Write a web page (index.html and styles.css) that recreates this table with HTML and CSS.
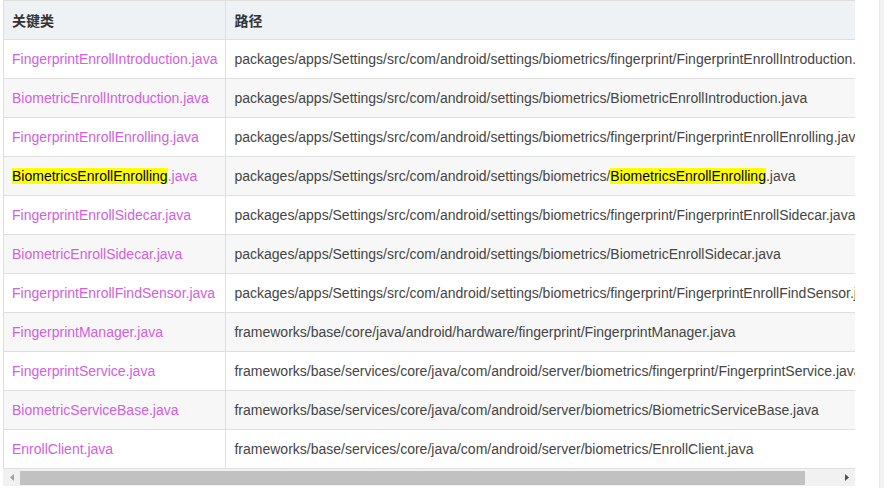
FILE: index.html
```html
<!DOCTYPE html>
<html lang="zh-CN">
<head>
    <meta charset="UTF-8">
    <meta name="viewport" content="width=device-width, initial-scale=1.0">
    <title>关键类</title>
    <link rel="stylesheet" href="styles.css">
</head>
<body>
    <div class="page">
        <div class="table-box">
            <div class="table-wrap">
                <table class="class-table">
                    <thead>
                        <tr>
                            <th>关键类</th>
                            <th>路径</th>
                        </tr>
                    </thead>
                    <tbody>
                        <tr>
                            <td><a href="#">FingerprintEnrollIntroduction.java</a></td>
                            <td>packages/apps/Settings/src/com/android/settings/biometrics/fingerprint/FingerprintEnrollIntroduction.java</td>
                        </tr>
                        <tr>
                            <td><a href="#">BiometricEnrollIntroduction.java</a></td>
                            <td>packages/apps/Settings/src/com/android/settings/biometrics/BiometricEnrollIntroduction.java</td>
                        </tr>
                        <tr>
                            <td><a href="#">FingerprintEnrollEnrolling.java</a></td>
                            <td>packages/apps/Settings/src/com/android/settings/biometrics/fingerprint/FingerprintEnrollEnrolling.java</td>
                        </tr>
                        <tr>
                            <td><a href="#"><mark>BiometricsEnrollEnrolling</mark>.java</a></td>
                            <td>packages/apps/Settings/src/com/android/settings/biometrics/<mark>BiometricsEnrollEnrolling</mark>.java</td>
                        </tr>
                        <tr>
                            <td><a href="#">FingerprintEnrollSidecar.java</a></td>
                            <td>packages/apps/Settings/src/com/android/settings/biometrics/fingerprint/FingerprintEnrollSidecar.java</td>
                        </tr>
                        <tr>
                            <td><a href="#">BiometricEnrollSidecar.java</a></td>
                            <td>packages/apps/Settings/src/com/android/settings/biometrics/BiometricEnrollSidecar.java</td>
                        </tr>
                        <tr>
                            <td><a href="#">FingerprintEnrollFindSensor.java</a></td>
                            <td>packages/apps/Settings/src/com/android/settings/biometrics/fingerprint/FingerprintEnrollFindSensor.java</td>
                        </tr>
                        <tr>
                            <td><a href="#">FingerprintManager.java</a></td>
                            <td>frameworks/base/core/java/android/hardware/fingerprint/FingerprintManager.java</td>
                        </tr>
                        <tr>
                            <td><a href="#">FingerprintService.java</a></td>
                            <td>frameworks/base/services/core/java/com/android/server/biometrics/fingerprint/FingerprintService.java</td>
                        </tr>
                        <tr>
                            <td><a href="#">BiometricServiceBase.java</a></td>
                            <td>frameworks/base/services/core/java/com/android/server/biometrics/BiometricServiceBase.java</td>
                        </tr>
                        <tr>
                            <td><a href="#">EnrollClient.java</a></td>
                            <td>frameworks/base/services/core/java/com/android/server/biometrics/EnrollClient.java</td>
                        </tr>
                    </tbody>
                </table>
            </div>
            <!-- Horizontal scrollbar -->
            <div class="hscroll">
                <span class="hscroll-btn">
                    <svg width="4" height="7" viewBox="0 0 4 7"><path d="M4 0L0 3.5L4 7Z" fill="#a3a3a3"/></svg>
                </span>
                <div class="hscroll-track">
                    <div class="hscroll-thumb"></div>
                </div>
                <span class="hscroll-btn">
                    <svg width="4" height="7" viewBox="0 0 4 7"><path d="M0 0L4 3.5L0 7Z" fill="#505050"/></svg>
                </span>
            </div>
        </div>
        <div class="side-track"></div>
    </div>
</body>
</html>
```

FILE: styles.css
```css
/* General Reset */
* {
    margin: 0;
    padding: 0;
    box-sizing: border-box;
}

body {
    background: #fff;
    font-family: "Liberation Sans", Arial, "Noto Sans CJK SC", sans-serif;
    font-size: 14px;
    color: #444;
}

.page {
    display: flex;
    height: 100vh;
    padding-left: 3px;
}

/* Table Wrapper */
.table-box {
    width: 852px;
    align-self: flex-start;
}

.table-wrap {
    overflow: hidden;
}

/* Table */
.class-table {
    border-collapse: collapse;
    white-space: nowrap;
}

.class-table th,
.class-table td {
    border: 1px solid #dfdfdf;
    padding: 8px 8px;
    line-height: 22px;
    text-align: left;
}

.class-table th {
    background: #eff2f5;
    color: #333;
    font-weight: 600;
    font-family: "Noto Sans CJK SC", sans-serif;
}

.class-table tbody tr:nth-child(even) td {
    background: #f7f7f7;
}

.class-table a {
    color: #d25ee0;
    text-decoration: none;
}

.class-table mark {
    background: #ffff00;
    color: #000;
}

/* Scrollbar */
.hscroll {
    display: flex;
    height: 17px;
    background: #f1f1f1;
}

.hscroll-btn {
    width: 17px;
    display: flex;
    align-items: center;
    justify-content: center;
}

.hscroll-track {
    flex: 1;
    padding: 2px 0 1px;
}

.hscroll-thumb {
    width: 785px;
    height: 100%;
    background: #c1c1c1;
}

/* Page edge */
.side-track {
    width: 5px;
    margin-left: auto;
    background: #f3f3f3;
    border-left: 1px solid #e9e9e9;
}
```
